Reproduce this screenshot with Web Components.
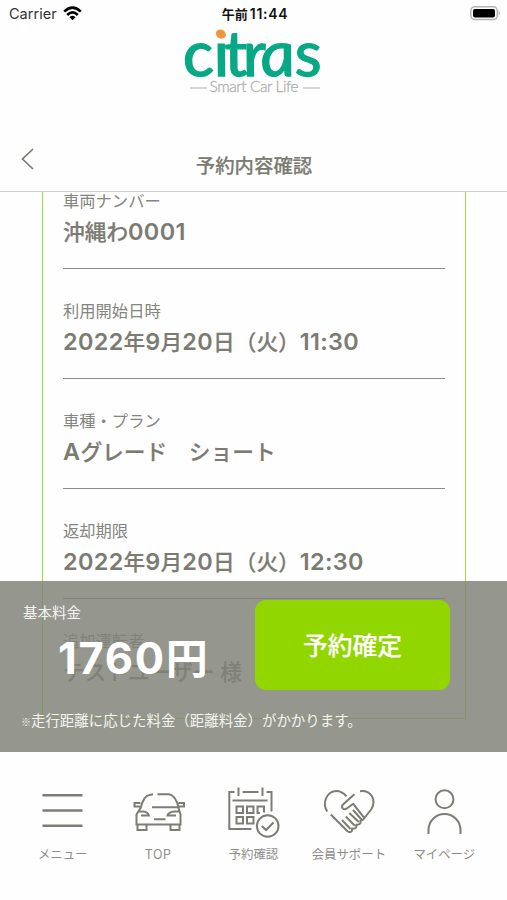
<!DOCTYPE html>
<html lang="ja">
<head>
<meta charset="utf-8">
<title>予約内容確認</title>
<style>
html,body{margin:0;height:900px;overflow:hidden;background:#fefefe}
body{font-family:Inter,"Noto Sans CJK JP",sans-serif;color:#7b7b72}
</style>
</head>
<body>
<booking-screen></booking-screen>
<script>
const define = (name, html) => customElements.define(name, class extends HTMLElement {
  constructor() {
    super();
    const t = document.createElement('template');
    t.innerHTML = html;
    this.attachShadow({mode: 'open'}).append(t.content.cloneNode(true));
  }
});

define('status-bar', `<style>
:host{display:grid;grid-template-columns:1fr auto 1fr;align-items:center;height:26px;padding:0 6px 0 9px;box-sizing:border-box;color:#111;font-size:14.5px}
.l{display:flex;align-items:center;gap:6px;color:#333;letter-spacing:.02px}
.t{font-size:13px;font-weight:700;color:#111;white-space:nowrap}
.t b{font-size:14px;font-weight:600;letter-spacing:.7px;margin-left:2px}
.b{justify-self:end}
svg{display:block}
</style>
<div class="l"><span>Carrier</span><svg width="19" height="15" viewBox="0 0 19 15" fill="none" stroke="#000" stroke-width="2.7"><path d="M1.2 5.6Q9.5-2.4 17.8 5.6M4.2 8.9Q9.5 3.9 14.8 8.9"/><path d="M9.5 14.2L6.5 11.2Q9.5 8.5 12.5 11.2Z" fill="#000" stroke="none"/></svg></div>
<div class="t">午前<b>11:44</b></div>
<svg class="b" width="31" height="15" viewBox="0 0 31 15"><rect x=".8" y=".8" width="26.5" height="12.8" rx="4" fill="#fff" stroke="#b4b4b4" stroke-width="1.5"/><rect x="3" y="3" width="22" height="8.5" rx="2" fill="#000"/><path d="M28.7 5Q31 7.2 28.7 9.5Z" fill="#aaa"/></svg>`);

define('brand-logo', `<style>
:host{display:block;width:150px;height:74px}
svg{display:block;overflow:visible}
</style>
<svg width="150" height="74" viewBox="178 26 150 74">
<defs><linearGradient id="dot" gradientUnits="userSpaceOnUse" x1="0" y1="-35.5" x2="0" y2="-34.5"><stop offset="0" stop-color="#f2953a"/><stop offset="1" stop-color="#07a985"/></linearGradient></defs>
<g transform="translate(184.5 76) scale(1.08 1) skewX(7.5)"><text y="0" x="0 28.6 38.6 55.6 71.6 103.4" font-family="Lato" font-style="italic" font-weight="400" font-size="63" fill="#07a985" stroke="#07a985" stroke-width="1.3">c<tspan fill="url(#dot)" stroke="url(#dot)">i</tspan>tras</text></g>
<path d="M189 88h17M302 88h17" stroke="#c8c8c8" stroke-width="1.3"/>
<text x="208.5" y="92" font-family="Lato" font-weight="300" font-size="15.5" textLength="89" lengthAdjust="spacing" fill="#aaa" stroke="#b0b0b0" stroke-width=".3">Smart Car Life</text>
</svg>`);

define('page-title', `<style>
:host{display:grid;grid-template-columns:60px 1fr 60px;align-items:start;height:53px;margin-top:39px;padding-top:9px;box-sizing:border-box}
svg{display:block;margin-left:21px}
h1{margin:4px 0 0 1px;text-align:center;font-size:19.4px;line-height:28px;height:28px;font-weight:500;-webkit-text-stroke:.2px #7b7b72}
</style>
<svg width="14" height="22" viewBox="0 0 14 22" fill="none" stroke="#7b7b72" stroke-width="1.7"><path d="M12 1L1.5 11L12 21"/></svg>
<h1><slot></slot></h1>`);

define('field-row', `<style>
:host{display:block;height:110px;box-sizing:border-box;border-bottom:1.5px solid #8b8b87}
.k{font-size:16.3px;line-height:24px;height:24px;padding-top:30px;font-weight:400;color:#85857f}
.v{font-size:21.7px;line-height:30px;height:30px;padding-top:4px;font-weight:500;-webkit-text-stroke:.2px #7b7b72;white-space:pre}
::slotted(b){font-size:23.4px;line-height:20px;font-weight:600;letter-spacing:.35px;-webkit-text-stroke:0}
:host([last]){border:0}
</style><div class="k"><slot name="label"></slot></div><div class="v"><slot></slot></div>`);

define('price-bar', `<style>
:host{display:grid;grid-template-columns:255px 195px;grid-template-rows:128px auto;height:171px;box-sizing:border-box;background:rgba(128,130,120,.83);color:#fff}
.k{font-size:14.5px;line-height:22px;margin:21px 0 0 23px;color:#f4f4f0}
.p{font-size:42px;line-height:50px;margin:9px 0 0 58px;font-weight:600;white-space:nowrap}
.p b{font-size:43.5px;letter-spacing:1.7px;font-weight:700}
button{all:unset;margin-top:19px;height:87px;padding-bottom:3px;border-radius:11px;background:#92d600;text-align:center;font-size:24.8px;font-weight:500;-webkit-text-stroke:.2px #fff}
.n{grid-column:1/3;font-size:14.45px;line-height:22px;margin:1px 0 0 21px;white-space:nowrap;color:#f4f4f0}
.n i{font:700 10px "Noto Sans CJK JP"}
</style>
<div><div class="k">基本料金</div><div class="p"><b>1760</b>円</div></div>
<button>予約確定</button>
<div class="n"><i>※</i>走行距離に応じた料金（距離料金）がかかります。</div>`);

define('tab-item', `<style>
:host{display:flex;flex-direction:column;align-items:center;font-size:12.4px;line-height:18px;color:#8d8d88;white-space:nowrap}
.i{height:60px;margin-bottom:5.5px}
</style><div class="i"><slot name="icon"></slot></div><span><slot></slot></span>`);

define('tab-bar', `<style>
:host{display:grid;grid-template-columns:repeat(5,95.4px);justify-content:center;height:148px;padding-top:28px;box-sizing:border-box;background:#fefefe}
svg{display:block;fill:none;stroke:#7d7d76;stroke-width:2}
.top{letter-spacing:.6px}
</style>
<tab-item><svg slot="icon" width="60" height="60"><path stroke-width="2.6" d="M9.5 15.2h40M9.5 30.5h40M9.5 45.8h40"/></svg>メニュー</tab-item>
<tab-item><svg slot="icon" width="60" height="60" viewBox="0 0 60 60"><path d="M12.5 28.5C14.5 20 17 15.5 21.5 15L25 14.3M29.5 14.3H41C46 14.8 49 21 50.8 28M24 27.3H50.5M12.5 28L8.5 34.5V44.5H52.5V34.5L50.5 28M12 26.5H6.5V23H12.5M51 26.5H56V23H50.5M9.5 45V50H18.5V45.5M42.5 45.5V50H51.5V45M10.5 31.5H15Q20 32 20.8 35.5H13M51 31.5H46.5Q40.5 32 39.5 35.5H48M26 39.3H37.5"/></svg><span class="top">TOP</span></tab-item>
<tab-item><svg slot="icon" width="60" height="60" viewBox="0 0 60 60"><path d="M28.5 49H6.3V12H11.5M19.5 12H35.5M43.5 12H48.5V31.5M15.5 7.5V16M39.5 7.5V16M9.5 20.5H44.5M13.5 26.5H20V33H13.5ZM24 26.5H30.5V33H24ZM41 32.5V26.5H34.5V33H37M13.5 37H20V43.5H13.5ZM24 37H30.5V43.5H24Z"/><circle cx="44.7" cy="46" r="10.8"/><path d="M38.8 46L43 50L50.5 42.5"/></svg>予約確認</tab-item>
<tab-item><svg slot="icon" width="60" height="60" viewBox="0 0 60 60" stroke-linejoin="round"><path d="M8.3 31.5C2.5 23 8 11 17.5 11C21.5 11 24.5 13 27.5 16.2M11.8 34.5L28.5 51.3Q31 53.2 33 50.8L33 48.5Q35.5 49.5 37.3 47.2V44.7Q40 45.3 41.5 43V40.5Q44.5 40.5 45.2 37.8L34.2 23.8L27.5 28.7C24.5 30.5 21.5 27.3 24 24.5L35.4 14.2M41 11.2C52.5 10 57.5 20 52.5 29L45 38.5M23 40L31.5 49M26.8 36.5L35.8 45.7M30.3 33L39.8 42M34 30L42.5 39.5"/></svg>会員サポート</tab-item>
<tab-item><svg slot="icon" width="60" height="60" viewBox="0 0 60 60"><circle cx="30.5" cy="19.3" r="9"/><path d="M14.5 54V50A16 16 0 0 1 46.5 50V54"/></svg>マイページ</tab-item>`);

define('booking-screen', `<style>
:host{display:flex;flex-direction:column;width:507px;height:900px}
header{height:192px;flex:none;box-sizing:border-box;border-bottom:1.5px solid #cfcfcf}
brand-logo{margin:0 auto}
main{height:560px;flex:none;display:grid;overflow:hidden}
.card{grid-area:1/1;width:424px;height:594px;box-sizing:border-box;border:1.5px solid #a0df3b;padding:0 20px;margin:-67px 0 0 42px}
price-bar{grid-area:1/1;align-self:end;z-index:1}
.first{margin-top:33px}
</style>
<header><status-bar></status-bar><brand-logo></brand-logo><page-title>予約内容確認</page-title></header>
<main>
<div class="card">
<field-row class="first"><span slot="label">車両ナンバー</span>沖縄わ<b>0001</b></field-row>
<field-row><span slot="label">利用開始日時</span><b>2022</b>年<b>9</b>月<b>20</b>日（火）<b>11:30</b></field-row>
<field-row><span slot="label">車種・プラン</span><b>A</b>グレード　ショート</field-row>
<field-row><span slot="label">返却期限</span><b>2022</b>年<b>9</b>月<b>20</b>日（火）<b>12:30</b></field-row>
<field-row last><span slot="label">追加運転者</span>テストユーザー 様</field-row>
</div>
<price-bar></price-bar>
</main>
<tab-bar></tab-bar>`);
</script>
</body>
</html>
